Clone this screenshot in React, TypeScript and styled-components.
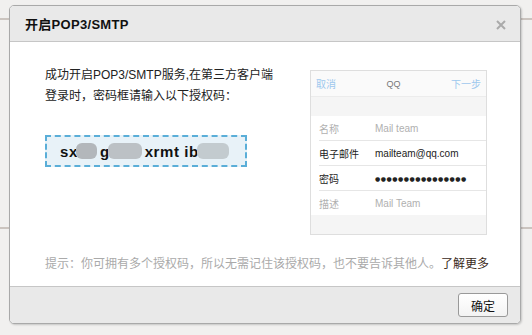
import styled, { createGlobalStyle } from 'styled-components';

const Global = createGlobalStyle`
  html, body {
    margin: 0;
    padding: 0;
  }
  body {
    width: 532px;
    height: 335px;
    overflow: hidden;
    background: #f1f0ef;
    font-family: "Liberation Sans", "Noto Sans CJK SC", sans-serif;
  }
`;

const Page = styled.div`
  position: relative;
  width: 532px;
  height: 335px;
  padding: 5px 0 0 9px;
  box-sizing: border-box;
`;

const BgLine = styled.div<{ $top: number }>`
  position: absolute;
  left: 0;
  right: 0;
  top: ${(p) => p.$top}px;
  height: 2px;
  background: #cbc4bf;
`;

const Dialog = styled.div`
  position: relative;
  width: 512px;
  height: 319px;
  box-sizing: border-box;
  border: 1px solid #a9a9a9;
  border-radius: 5px;
  box-shadow: 1px 1px 2px rgba(0, 0, 0, 0.18);
  background: #fff;
  display: flex;
  flex-direction: column;
  overflow: hidden;
`;

const Header = styled.div`
  height: 35px;
  flex: none;
  display: flex;
  align-items: center;
  justify-content: space-between;
  padding: 0 14px 0 15px;
  background: #e9e9e9;
  border-bottom: 1px solid #c6c6c6;
`;

const Title = styled.div`
  font-size: 13px;
  font-weight: bold;
  color: #111;
  letter-spacing: 0.3px;
`;

const Close = styled.svg`
  width: 10px;
  height: 10px;
  margin-top: 2px;
`;

const Body = styled.div`
  flex: 1;
  padding: 23px 33px 0 35px;
`;

const Row = styled.div`
  display: flex;
  justify-content: space-between;
  align-items: flex-start;
`;

const Intro = styled.div`
  display: flex;
  flex-direction: column;
  align-items: flex-start;
`;

const Lead = styled.p`
  margin: 0;
  width: 230px;
  font-size: 12px;
  line-height: 21px;
  color: #222;
`;

const CodeBox = styled.div`
  margin-top: 28px;
  width: 202px;
  height: 32px;
  box-sizing: border-box;
  border: 2px dashed #5aaed8;
  background: #e8f2f8;
  display: flex;
  align-items: center;
  padding-left: 13px;
  font-size: 15px;
  font-weight: bold;
  color: #111;
  letter-spacing: 0.6px;
`;

const Blur = styled.span<{ $w: number; $tone: string }>`
  display: inline-block;
  width: ${(p) => p.$w}px;
  height: 16px;
  border-radius: 6px;
  background: ${(p) => p.$tone};
  margin: 0 3px 0 -2px;
`;

const Phone = styled.div`
  margin-top: 5px;
  width: 177px;
  box-sizing: border-box;
  border: 1px solid #dedede;
  background: #f5f5f5;
  font-size: 10px;
`;

const PhoneBar = styled.div`
  height: 25px;
  display: flex;
  align-items: center;
  justify-content: space-between;
  padding: 0 5px;
  background: #fafafa;
  border-bottom: 1px solid #ececec;
`;

const BarLink = styled.span`
  color: #9dc8ee;
`;

const BarTitle = styled.span`
  color: #777;
  font-size: 9px;
`;

const Gap = styled.div`
  height: 19px;
`;

const List = styled.div`
  background: #fff;
  padding-left: 8px;
`;

const Field = styled.div<{ $last?: boolean }>`
  height: 24px;
  display: flex;
  align-items: center;
  border-bottom: ${(p) => (p.$last ? 'none' : '1px solid #e6e6e6')};
`;

const Label = styled.span<{ $dim?: boolean }>`
  width: 56px;
  flex: none;
  color: ${(p) => (p.$dim ? '#b0b0b0' : '#222')};
`;

const Value = styled.span<{ $dim?: boolean }>`
  color: ${(p) => (p.$dim ? '#b0b0b0' : '#222')};
`;

const Dots = styled.span`
  font-family: "DejaVu Sans", sans-serif;
  font-size: 6px;
  letter-spacing: 0.5px;
  color: #222;
`;

const Hint = styled.p`
  margin: 19px 0 0;
  font-size: 12px;
  line-height: 20px;
  color: #aaa;
  white-space: nowrap;
`;

const More = styled.a`
  color: #3a2a1a;
  text-decoration: none;
`;

const Footer = styled.div`
  height: 36px;
  flex: none;
  display: flex;
  align-items: center;
  justify-content: flex-end;
  padding: 0 12px;
  background: #e9e9e9;
  border-top: 1px solid #c6c6c6;
`;

const Button = styled.button`
  width: 50px;
  height: 24px;
  border: 1px solid #999;
  border-radius: 3px;
  background: linear-gradient(#fff, #f3f3f3);
  font-family: inherit;
  font-size: 12px;
  color: #111;
  padding: 0;
`;

export default function App() {
  return (
    <Page>
      <Global />
      <BgLine $top={18} />
      <BgLine $top={227} />
      <Dialog>
        <Header>
          <Title>开启POP3/SMTP</Title>
          <Close viewBox="0 0 10 10">
            <path d="M1 1 L9 9 M9 1 L1 9" stroke="#aaa" strokeWidth="2" />
          </Close>
        </Header>
        <Body>
          <Row>
            <Intro>
              <Lead>成功开启POP3/SMTP服务,在第三方客户端登录时，密码框请输入以下授权码：</Lead>
              <CodeBox>
                sx<Blur $w={21} $tone="#b3b7bb" />g<Blur $w={34} $tone="#bcc1c5" />xrmt ib
                <Blur $w={32} $tone="#c3cbcf" />
              </CodeBox>
            </Intro>
            <Phone>
              <PhoneBar>
                <BarLink>取消</BarLink>
                <BarTitle>QQ</BarTitle>
                <BarLink>下一步</BarLink>
              </PhoneBar>
              <Gap />
              <List>
                <Field>
                  <Label $dim>名称</Label>
                  <Value $dim>Mail team</Value>
                </Field>
                <Field>
                  <Label>电子邮件</Label>
                  <Value>mailteam@qq.com</Value>
                </Field>
                <Field>
                  <Label>密码</Label>
                  <Dots>●●●●●●●●●●●●●●●●</Dots>
                </Field>
                <Field $last>
                  <Label $dim>描述</Label>
                  <Value $dim>Mail Team</Value>
                </Field>
              </List>
              <Gap />
            </Phone>
          </Row>
          <Hint>
            提示：你可拥有多个授权码，所以无需记住该授权码，也不要告诉其他人。<More href="#">了解更多</More>
          </Hint>
        </Body>
        <Footer>
          <Button>确定</Button>
        </Footer>
      </Dialog>
    </Page>
  );
}
